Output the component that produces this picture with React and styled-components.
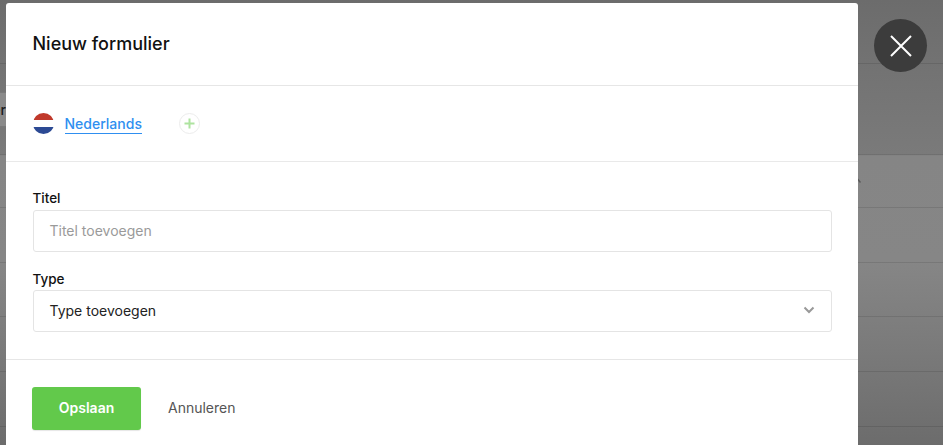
import React from "react";
import styled, { createGlobalStyle } from "styled-components";

const Global = createGlobalStyle`
  html, body { margin: 0; padding: 0; height: 100%; overflow: hidden; }
  body { font-family: Inter, "Liberation Sans", sans-serif; background: #777; }
  * { box-sizing: border-box; }
`;

const Page = styled.div`
  position: relative;
  width: 943px;
  height: 445px;
  overflow: hidden;
  background: linear-gradient(180deg, #6c6c6c 0px, #727272 60px, #7a7a7a 154px, #858585 156px, #868686 260px, #7a7a7a 350px, #6c6c6c 445px);
  padding: 3px 0 0 6px;
`;

const BackdropRows = styled.div`
  position: absolute;
  inset: 0;
  display: flex;
  flex-direction: column;
`;

const BackdropRow = styled.div`
  height: ${p => p.$h}px;
  flex: none;
  border-bottom: 1px solid rgba(0, 0, 0, 0.1);
`;

const BackdropCell = styled.div`
  position: absolute;
  left: 0;
  top: 92px;
  width: 8px;
  height: 35px;
  background: #8a8a8a;
  border: solid rgba(0, 0, 0, 0.12);
  border-width: 1px 0;
  overflow: hidden;
  display: flex;
  align-items: center;
  justify-content: flex-end;
  padding-right: 2px;
  font-size: 14px;
  font-weight: 500;
  color: #1c1c1c;
  white-space: nowrap;
`;

const BackdropCaret = styled.svg`
  position: absolute;
  left: 857px;
  top: 178px;
`;

const Modal = styled.div`
  position: relative;
  width: 852.4px;
  height: 460px;
  background: #fff;
  border-radius: 3px 3px 0 0;
`;

const Header = styled.div`
  height: 83px;
  padding: 0 26.5px 2px;
  display: flex;
  align-items: center;
  border-bottom: 1px solid #e6e6e6;
`;

const Title = styled.h1`
  margin: 0;
  font-size: 18px;
  font-weight: 500;
  color: #111;
`;

const LangBar = styled.div`
  height: 76px;
  padding: 0 26.5px;
  display: flex;
  align-items: center;
  border-bottom: 1px solid #e9e9e9;
`;

const Flag = styled.svg`
  width: 21px;
  height: 21px;
  flex: none;
  margin-right: 11px;
`;

const LangLink = styled.a`
  font-size: 14px;
  font-weight: 500;
  color: #2f8ff0;
  line-height: 17px;
  border-bottom: 1px solid #2f8ff0;
  padding-bottom: 1px;
  margin-right: 37px;
  position: relative;
  top: 1px;
`;

const AddLang = styled.button`
  width: 21px;
  height: 21px;
  padding: 0;
  border: 1px solid #ececec;
  border-radius: 50%;
  background: #fff;
  display: flex;
  align-items: center;
  justify-content: center;
`;

const Form = styled.div`
  padding: 28px 26.5px 0;
  height: 198px;
  border-bottom: 1px solid #e6e6e6;
`;

const Field = styled.div`
  margin-bottom: 19px;
`;

const Label = styled.div`
  font-size: 13.5px;
  font-weight: 500;
  color: #111;
  line-height: 17px;
  margin-bottom: 3px;
`;

const TypeLabel = styled(Label)`
  margin-top: 1px;
  margin-bottom: 2px;
`;

const InputBox = styled.div`
  height: 42px;
  border: 1px solid #e4e4e4;
  border-radius: 3px;
  padding: 0 16px 2px;
  display: flex;
  align-items: center;
  justify-content: space-between;
  font-size: 14px;
  color: ${p => (p.$placeholder ? "#9a9a9a" : "#222")};
`;

const Footer = styled.div`
  padding: 27px 26px 0;
  display: flex;
  align-items: center;
`;

const SaveButton = styled.button`
  width: 109px;
  height: 43px;
  border: none;
  border-radius: 3px;
  padding: 0 0 2px;
  background: #62c94b;
  color: #fff;
  font: 600 14px Inter, "Liberation Sans", sans-serif;
  box-shadow: 0 1px 1px rgba(0, 0, 0, 0.1);
`;

const Cancel = styled.span`
  margin-left: 27px;
  margin-bottom: 2px;
  font-size: 14px;
  color: #555;
`;

const CloseButton = styled.button`
  position: absolute;
  left: 874px;
  top: 19px;
  width: 53px;
  height: 53px;
  border: none;
  padding: 0;
  border-radius: 50%;
  background: #3c3c3c;
  display: flex;
  align-items: center;
  justify-content: center;
`;

const rows = [64, 91, 53, 55, 54, 55, 55];

export default function App() {
  return (
    <Page>
      <Global />
      <BackdropRows>
        {rows.map((h, i) => (
          <BackdropRow key={i} $h={h} />
        ))}
      </BackdropRows>
      <BackdropCell>er</BackdropCell>
      <BackdropCaret width="6" height="6" viewBox="0 0 6 6">
        <path d="M0.5 1l3 3.5" stroke="#5a5a5a" strokeWidth="1.4" fill="none" />
      </BackdropCaret>
      <Modal>
        <Header>
          <Title>Nieuw formulier</Title>
        </Header>
        <LangBar>
          <Flag viewBox="0 0 21 21">
            <defs>
              <clipPath id="flag">
                <circle cx="10.5" cy="10.5" r="10.5" />
              </clipPath>
            </defs>
            <g clipPath="url(#flag)">
              <rect width="21" height="7" fill="#c0392b" />
              <rect y="7" width="21" height="7" fill="#fff" />
              <rect y="14" width="21" height="7" fill="#2c4a94" />
            </g>
          </Flag>
          <LangLink>Nederlands</LangLink>
          <AddLang>
            <svg width="11" height="11" viewBox="0 0 11 11">
              <path d="M5.5 0.5v10M0.5 5.5h10" stroke="#aee3a0" strokeWidth="2" fill="none" />
            </svg>
          </AddLang>
        </LangBar>
        <Form>
          <Field>
            <Label>Titel</Label>
            <InputBox $placeholder>Titel toevoegen</InputBox>
          </Field>
          <Field>
            <TypeLabel>Type</TypeLabel>
            <InputBox>
              Type toevoegen
              <svg width="12" height="8" viewBox="0 0 12 8">
                <path d="M1.5 1.5L6 6l4.5-4.5" stroke="#999" strokeWidth="2" fill="none" />
              </svg>
            </InputBox>
          </Field>
        </Form>
        <Footer>
          <SaveButton>Opslaan</SaveButton>
          <Cancel>Annuleren</Cancel>
        </Footer>
      </Modal>
      <CloseButton>
        <svg width="22" height="22" viewBox="0 0 22 22">
          <path d="M1 1l20 20M21 1L1 21" stroke="#fff" strokeWidth="2" fill="none" />
        </svg>
      </CloseButton>
    </Page>
  );
}
